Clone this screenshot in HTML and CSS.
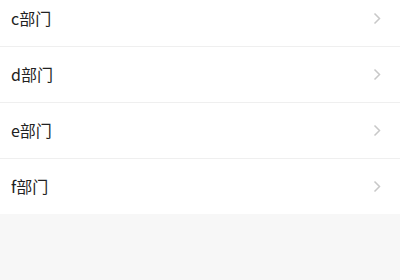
FILE: index.html
```html
<!DOCTYPE html>
<html lang="zh-CN">
<head>
    <meta charset="UTF-8">
    <meta name="viewport" content="width=device-width, initial-scale=1.0">
    <title>部门列表</title>
    <link rel="stylesheet" href="styles.css">
</head>
<body>
    <div class="dept-list">
        <div class="dept-item">
            <span class="dept-name">c部门</span>
            <svg class="arrow" width="8" height="13" viewBox="0 0 8 13"><path d="M1.5 1.5 L6.5 6.5 L1.5 11.5" fill="none" stroke="#c8c8c8" stroke-width="1.5"/></svg>
        </div>
        <div class="dept-item">
            <span class="dept-name">d部门</span>
            <svg class="arrow" width="8" height="13" viewBox="0 0 8 13"><path d="M1.5 1.5 L6.5 6.5 L1.5 11.5" fill="none" stroke="#c8c8c8" stroke-width="1.5"/></svg>
        </div>
        <div class="dept-item">
            <span class="dept-name">e部门</span>
            <svg class="arrow" width="8" height="13" viewBox="0 0 8 13"><path d="M1.5 1.5 L6.5 6.5 L1.5 11.5" fill="none" stroke="#c8c8c8" stroke-width="1.5"/></svg>
        </div>
        <div class="dept-item">
            <span class="dept-name">f部门</span>
            <svg class="arrow" width="8" height="13" viewBox="0 0 8 13"><path d="M1.5 1.5 L6.5 6.5 L1.5 11.5" fill="none" stroke="#c8c8c8" stroke-width="1.5"/></svg>
        </div>
    </div>
</body>
</html>
```

FILE: styles.css
```css
html, body {
    margin: 0;
    padding: 0;
    height: 100%;
    background-color: #f7f7f7;
    font-family: "Noto Sans CJK SC", sans-serif;
    overflow: hidden;
}
.dept-list {
    background-color: #fff;
    margin-top: -9px;
}
.dept-item {
    display: flex;
    align-items: center;
    justify-content: space-between;
    height: 55px;
    padding: 0 19px 0 11px;
    border-bottom: 1px solid #efefef;
}
.dept-item:last-child {
    border-bottom: none;
}
.dept-name {
    font-size: 16px;
    line-height: 20px;
    color: #222;
    margin-top: -2px;
}
.arrow {
    display: block;
}
```
